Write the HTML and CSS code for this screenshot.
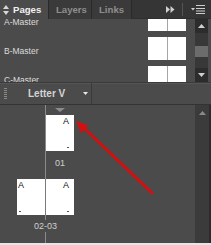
FILE: index.html
```html
<!DOCTYPE html>
<html>
<head>
<meta charset="utf-8">
<link rel="stylesheet" href="styles.css">
</head>
<body>
<div class="panel">
  <div class="tabs">
    <div class="tab active">
      <svg class="tab-ico" width="6" height="10" viewBox="0 0 6 10"><path d="M3 0 L6 4 L0 4 Z M0 6 L6 6 L3 10 Z" fill="#d8d8d8"/></svg>
      <span>Pages</span>
    </div>
    <div class="tab">Layers</div>
    <div class="tab">Links</div>
    <div class="tab-fill">
      <svg class="ffwd" width="9" height="7" viewBox="0 0 9 7"><path d="M0 0 L4 3.5 L0 7 Z M4.5 0 L8.5 3.5 L4.5 7 Z" fill="#cfcfcf"/></svg>
      <span class="vsep"></span>
      <svg class="menu" width="14" height="9" viewBox="0 0 14 9"><path d="M0 3 L4 3 L2 5.5 Z" fill="#cfcfcf"/><path d="M5 0.5 H14 M5 3.5 H14 M5 6 H14 M5 8.5 H14" stroke="#cfcfcf" stroke-width="1"/></svg>
    </div>
  </div>

  <div class="masters">
    <div class="master-list">
      <div class="master-row"><span class="mname">A-Master</span><div class="mthumb"><i></i><i></i></div></div>
      <div class="master-row"><span class="mname">B-Master</span><div class="mthumb"><i></i><i></i></div></div>
      <div class="master-row"><span class="mname">C-Master</span><div class="mthumb"><i></i><i></i></div></div>
    </div>
    <div class="vscroll">
      <div class="sbtn"><svg width="7" height="4" viewBox="0 0 7 4"><path d="M3.5 0 L7 4 L0 4 Z" fill="#cfcfcf"/></svg></div>
      <div class="strack"><div class="sthumb"></div></div>
      <div class="sbtn"><svg width="7" height="4" viewBox="0 0 7 4"><path d="M0 0 L7 0 L3.5 4 Z" fill="#cfcfcf"/></svg></div>
    </div>
  </div>

  <div class="toolbar">
    <span class="grip"></span>
    <span class="size">Letter V</span>
    <svg class="drop" width="5" height="3" viewBox="0 0 5 3"><path d="M0 0 L5 0 L2.5 3 Z" fill="#e8e8e8"/></svg>
    <span class="tsep"></span>
  </div>

  <div class="pages">
    <div class="canvas">
      <div class="spine"></div>
      <div class="spread single">
        <svg class="marker" width="10" height="4" viewBox="0 0 10 4"><path d="M0 0 L10 0 L5 4 Z" fill="#8c8c8c"/></svg>
        <div class="pgs">
          <div class="pg right"><b>A</b><em></em></div>
        </div>
        <div class="plabel">01</div>
      </div>
      <div class="spread double">
        <div class="pgs">
          <div class="pg left"><b>A</b><em></em></div>
          <div class="pg right"><b>A</b><em></em></div>
        </div>
        <div class="plabel">02-03</div>
      </div>
    </div>
    <div class="vscroll2">
      <svg width="7" height="4" viewBox="0 0 7 4"><path d="M3.5 0 L7 4 L0 4 Z" fill="#8a8a8a"/></svg>
    </div>
    <div class="edge"></div>
  </div>
  <div class="bottom"></div>

  <svg class="annot" width="211" height="245" viewBox="0 0 211 245">
    <line x1="152" y1="193" x2="85" y2="129" stroke="#d30f0f" stroke-width="3" stroke-linecap="round"/>
    <path d="M76 121 L88.5 125.5 L81 133.2 Z" fill="#d30f0f"/>
  </svg>
</div>
</body>
</html>
```

FILE: styles.css
```css
* { box-sizing: border-box; }
html, body { margin: 0; padding: 0; background: #4b4b4b; }
.panel {
  position: relative;
  width: 211px;
  height: 245px;
  overflow: hidden;
  display: flex;
  flex-direction: column;
  background: #4b4b4b;
  font-family: "Liberation Sans", Arial, sans-serif;
}

/* tabs */
.tabs {
  height: 19px;
  flex: none;
  display: flex;
  background: #353535;
}
.tab {
  height: 19px;
  line-height: 19px;
  font-size: 9.6px;
  font-weight: bold;
  color: #8e8e8e;
  border-right: 1px solid #2a2a2a;
  background: #3a3a3a;
  padding: 0 0 0 7px;
  width: 43px;
}
.tab + .tab + .tab { width: 40px; }
.tab.active {
  width: 49px;
  background: #4b4b4b;
  color: #f2f2f2;
  padding-left: 3px;
  display: flex;
  align-items: center;
  gap: 4px;
  border-right: 1px solid #2a2a2a;
}
.tab-ico { flex: none; }
.tab-fill {
  flex: 1;
  display: flex;
  align-items: center;
  justify-content: flex-end;
  padding-right: 6px;
  border-bottom: 1px solid #2e2e2e;
}
.ffwd { margin-right: 7px; }
.vsep { width: 1px; height: 13px; background: #555; margin-right: 8px; }

/* masters */
.masters {
  height: 63px;
  flex: none;
  display: flex;
  overflow: hidden;
}
.master-list {
  flex: 1;
  margin-top: -14px;
}
.master-row {
  height: 29px;
  display: flex;
  justify-content: space-between;
  padding: 0 9px 0 4px;
}
.mname {
  margin-top: 11px;
  line-height: 12px;
  font-size: 8.5px;
  color: #dcdcdc;
}
.mthumb {
  margin-top: 3px;
  width: 38px;
  height: 23px;
  display: flex;
  gap: 1px;
  background: #a5a5a5;
}
.mthumb i { flex: 1; background: #fff; }
.vscroll {
  width: 13px;
  margin-right: 3px;
  display: flex;
  flex-direction: column;
  background: #383838;
}
.sbtn {
  height: 14px;
  display: flex;
  align-items: center;
  justify-content: center;
  background: #2c2c2c;
}
.strack { flex: 1; padding-top: 13px; }
.sthumb { height: 11px; background: #6c6c6c; }

/* toolbar */
.toolbar {
  height: 23px;
  flex: none;
  display: flex;
  align-items: center;
  border-top: 1px solid #3b3b3b;
  border-bottom: 1px solid #333;
  box-shadow: inset 0 1px 0 #555;
}
.grip {
  width: 3px;
  height: 12px;
  margin-left: 4px;
  background: repeating-linear-gradient(#8a8a8a 0 1px, transparent 1px 2px);
}
.size {
  margin-left: 21px;
  font-size: 10px;
  font-weight: bold;
  color: #d4d4d4;
}
.drop { margin-left: 18px; }
.tsep { width: 1px; height: 21px; background: #3a3a3a; margin-left: 3px; }

/* pages */
.pages {
  flex: 1;
  display: flex;
  min-height: 0;
}
.canvas {
  position: relative;
  flex: 1;
  display: flex;
  flex-direction: column;
  padding-top: 3px;
}
.spine {
  position: absolute;
  left: 45px;
  top: 0;
  bottom: 0;
  width: 1px;
  background: #8a8a8a;
}
.spread {
  position: relative;
  display: flex;
  flex-direction: column;
}
.single { margin-left: 46px; width: 28px; align-items: center; }
.double { margin-left: 17px; width: 57px; align-items: center; margin-top: 10px; }
.marker { display: block; margin-bottom: 3px; }
.pgs { display: flex; gap: 1px; height: 36px; }
.double .pgs { background: #7a7a7a; }
.pg {
  position: relative;
  width: 28px;
  height: 36px;
  background: #fff;
}
.pg b {
  position: absolute;
  top: 1px;
  font-size: 9px;
  line-height: 10px;
  font-weight: normal;
  color: #111;
}
.pg.right b { right: 5px; }
.pg.left b { left: 1px; }
.pg em {
  position: absolute;
  bottom: 3px;
  width: 2px;
  height: 1px;
  background: #555;
}
.pg.right em { right: 5px; }
.pg.left em { left: 2px; }
.plabel {
  margin-top: 6px;
  line-height: 12px;
  font-size: 9px;
  color: #cfcfcf;
}
.double .plabel { margin-top: 5px; background: #4b4b4b; padding: 0 1px; }
.vscroll2 {
  width: 14px;
  background: #3b3b3b;
  display: flex;
  justify-content: center;
  padding-top: 6px;
}
.edge { width: 2px; background: #2b2b2b; }
.bottom { height: 2px; flex: none; background: #e6e6e6; }

.annot {
  position: absolute;
  left: 0;
  top: 0;
  pointer-events: none;
}
```
